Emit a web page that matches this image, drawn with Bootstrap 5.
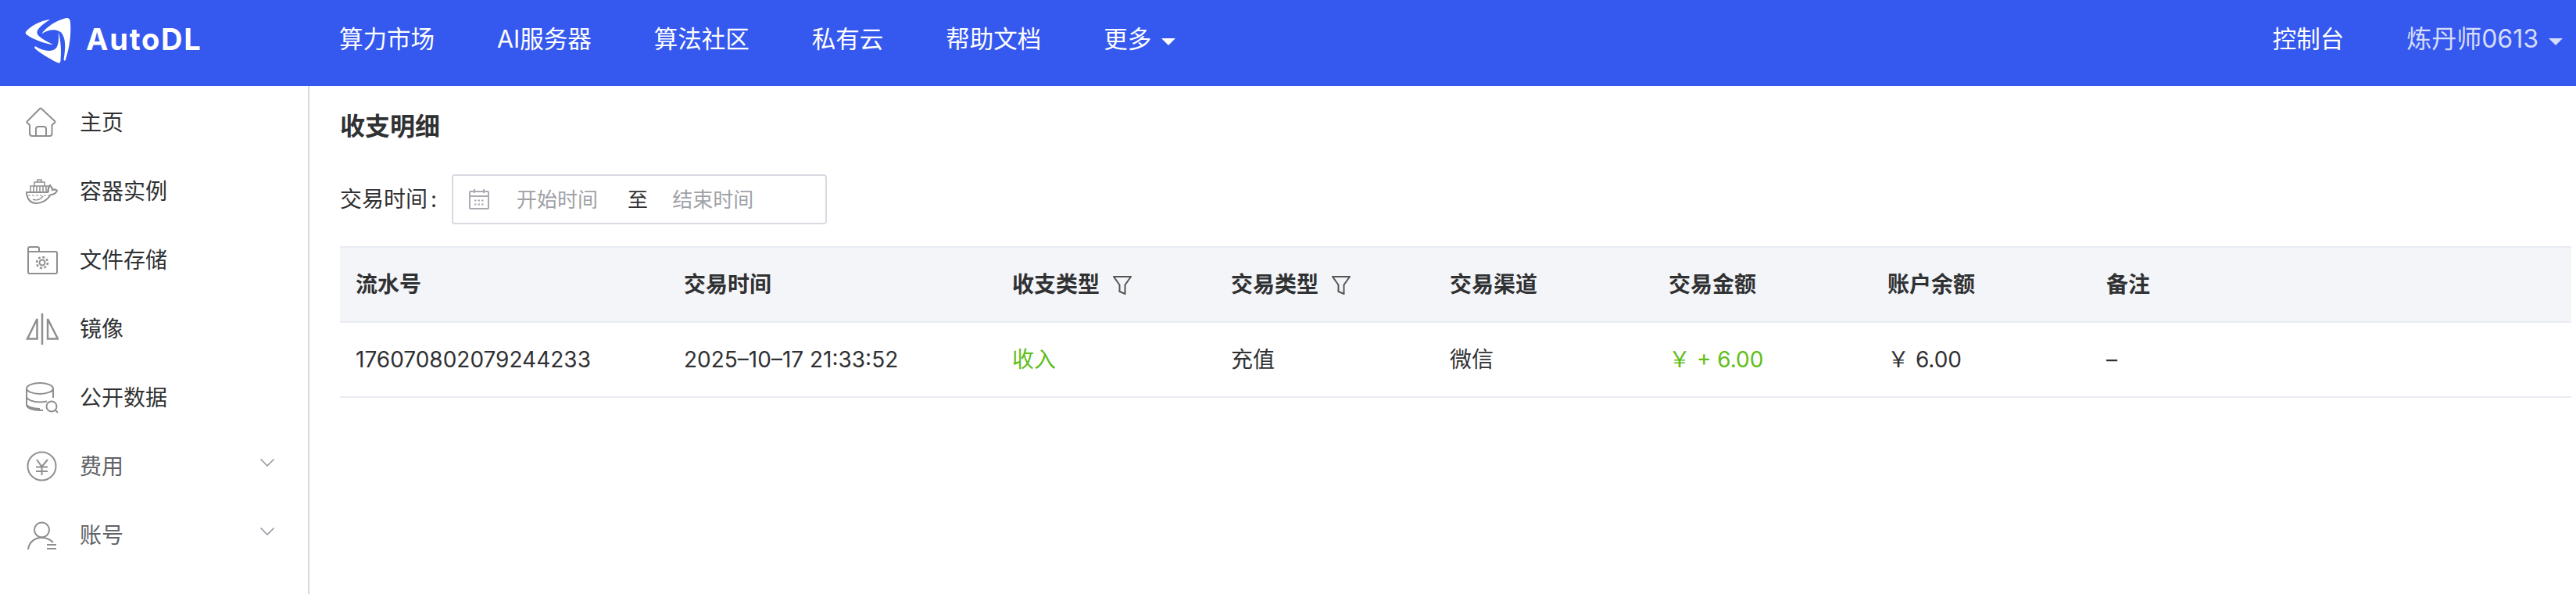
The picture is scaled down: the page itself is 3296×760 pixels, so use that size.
<!DOCTYPE html>
<html lang="zh-CN">

<head>
    <meta charset="utf-8">
    <meta name="viewport" content="width=device-width, initial-scale=1">
    <title>收支明细 - AutoDL</title>

    <link href="https://cdn.jsdelivr.net/npm/bootstrap@5.3.3/dist/css/bootstrap.min.css" rel="stylesheet">
    <style>
        html, body { height: 100%; }
        body { font-family: Inter, "Noto Sans CJK SC", sans-serif; color: #303133; overflow: hidden; background: #fff; }

        /* top bar */
        .top-bar { height: 110px; background: #3559ef; padding: 0; align-items: flex-start; flex-wrap: nowrap; }
        .brand-box { width: 434px; height: 110px; padding: 18px 0 0 28px; gap: 14px; flex: none; }
        .brand-name { font-size: 38px; font-weight: 700; color: #fff; line-height: 64px; letter-spacing: 1.800px; }
        .top-links { gap: 80px; padding-top: 27px; flex-direction: row; }
        .top-bar .navbar-nav .nav-link { font-size: 30.500px; line-height: 46px; color: #fff; padding: 0; white-space: nowrap; }
        .top-user { margin-left: auto; padding: 27px 17px 0 0; gap: 80px; align-items: flex-start; }
        .top-bar .navbar-nav .user-link { color: #d6dcfb; font-size: 32px; }
        .top-bar .dropdown-toggle::after { border-top-width: 9px; border-left-width: 9px; border-right-width: 9px; border-bottom: 0; margin-left: 13px; vertical-align: 3px; }

        /* side menu */
        .page-body { height: 650px; }
        .side-menu { width: 396px; flex: none; border-right: 2px solid #d8dae2; padding-top: 3px; }
        .side-item { height: 88px; padding: 0 43px 0 33px; font-size: 28px; color: #303133; text-decoration: none; }
        .side-item.soft { color: #606266; }
        .side-icon { width: 42px; height: 42px; flex: none; margin-right: 27px; fill: none; stroke: #8f8f8f; stroke-width: 2; }
        .side-arrow { width: 18px; height: 10px; fill: none; stroke: #909399; stroke-width: 1.500; margin-left: auto; margin-top: -10px; }

        /* bills */
        .bill-pane { padding: 0 6px 0 39px; }
        .bill-title { font-size: 32px; font-weight: 700; line-height: 48px; margin: 28px 0 37px; color: #303133; }
        .bill-label { font-size: 28px; margin-right: 19px; }
        .label-colon { margin-left: 4px; }
        .date-range { width: 480px; height: 64px; border: 2px solid #d8dae2; border-radius: 4px; padding: 0 20px; font-size: 26px; color: #a0a2a8; }
        .date-range svg { width: 26px; height: 26px; flex: none; fill: none; stroke: #a8abb2; stroke-width: 2; margin-right: 35px; }
        .date-sep { color: #303133; margin: 0 31px 0 38px; }
        .bill-table { margin: 28px 0 0; table-layout: fixed; font-size: 28px; --bs-table-color: #303133; width: 100%; }
        .bill-table th, .bill-table td { padding: 0 20px; vertical-align: middle; border-bottom: 2px solid #e9ebf3; white-space: nowrap; }
        .bill-table th { height: 96px; width: 280px; font-weight: 600; background: #f4f5f9; border-top: 2px solid #e9ebf3; }
        .bill-table th.wide-col { width: 420px; }
        .bill-table th.rest-col { width: auto; }
        .bill-table td { height: 96px; }
        .bill-table .money-in { color: #5fbe17; }
        .filter-mark { width: 24px; height: 24px; margin-left: 17px; fill: none; stroke: #555; stroke-width: 2; vertical-align: -3px; }
    </style>
</head>

<body>
    <!-- top bar -->
    <nav class="navbar navbar-expand top-bar">
        <a class="d-flex brand-box text-decoration-none" href="#">
            <svg width="68" height="64" viewBox="0 0 204 192">
                <path fill="#fff" d="M15 68C32 48 70 24 108 21C84 36 60 54 58 70C58 86 86 100 120 118C82 112 42 96 20 80C14 76 13 72 15 68Z"/>
                <path fill="#fff" d="M76 76C92 50 132 24 170 15C180 13 186 20 186 32C190 80 182 130 168 174C166 182 160 180 161 172C168 130 168 100 156 78C146 60 112 52 76 76Z"/>
                <path fill="#fff" d="M52 124C82 144 116 146 130 132C142 118 142 94 140 68C150 100 152 146 148 182C147 188 142 189 136 186C106 172 70 150 50 132C48 128 49 125 52 124Z"/>
            </svg>
            <span class="brand-name">AutoDL</span>
        </a>
        <ul class="navbar-nav top-links">
            <li class="nav-item"><a class="nav-link" href="#">算力市场</a></li>
            <li class="nav-item"><a class="nav-link" href="#">AI服务器</a></li>
            <li class="nav-item"><a class="nav-link" href="#">算法社区</a></li>
            <li class="nav-item"><a class="nav-link" href="#">私有云</a></li>
            <li class="nav-item"><a class="nav-link" href="#">帮助文档</a></li>
            <li class="nav-item"><a class="nav-link dropdown-toggle" href="#">更多</a></li>
        </ul>
        <ul class="navbar-nav top-user">
            <li class="nav-item"><a class="nav-link" href="#">控制台</a></li>
            <li class="nav-item"><a class="nav-link user-link dropdown-toggle" href="#">炼丹师0613</a></li>
        </ul>
    </nav>

    <div class="d-flex page-body">
        <!-- side menu -->
        <div class="side-menu">
            <a class="d-flex align-items-center side-item" href="#">
                <svg class="side-icon" viewBox="0 0 42 42"><path d="M5 24 1.700 21Q1 20 2 19L18 3Q19 2 20 3L37 19Q38 20 37 21L33.500 24V35a3 3 0 0 1-3 3H8a3 3 0 0 1-3-3Z"/><path d="M13 38V29a3 3 0 0 1 3-3h7a3 3 0 0 1 3 3v9"/></svg>
                主页
            </a>
            <a class="d-flex align-items-center side-item" href="#">
                <svg class="side-icon" viewBox="0 0 42 42"><path d="M1 22H28C28 18 30 15 31 13C33 15 34 17 34 19C36 18 38 18 40 20C38 24 35 25 32 25C28 31 22 36 13 36C6 36 1 30 1 22Z"/><path d="M6 22V14H29V22M11 14V9H24V14M15 9V6H20V9M10 14V22M14 14V22M18 14V22M22 14V22M26 14V22" stroke-width="1.500"/><path d="M3 26H30" stroke-width="1.200" stroke-dasharray="3 2"/><path d="M9 31C14 33 19 31 22 27" stroke-width="1.500"/></svg>
                容器实例
            </a>
            <a class="d-flex align-items-center side-item" href="#">
                <svg class="side-icon" viewBox="0 0 42 42"><path d="M3 10V6A2 2 0 0 1 5 4H15A2 2 0 0 1 17 6V10"/><path d="M3 10H38A2 2 0 0 1 40 12V36A2 2 0 0 1 38 38H5A2 2 0 0 1 3 36Z"/><circle cx="21" cy="24" r="3.500"/><circle cx="21" cy="24" r="7" stroke-width="2.500" stroke-dasharray="3 2.500"/></svg>
                文件存储
            </a>
            <a class="d-flex align-items-center side-item" href="#">
                <svg class="side-icon" viewBox="0 0 42 42"><path d="M14.500 8V33.500H2ZM28 8V33.500H41ZM21 1V41" stroke-width="2.500"/></svg>
                镜像
            </a>
            <a class="d-flex align-items-center side-item" href="#">
                <svg class="side-icon" viewBox="0 0 42 42"><ellipse cx="18" cy="9" rx="17" ry="7"/><path d="M1 9V30C1 34 9 37 18 37H22M35 9V21M1 19.500C1 23 9 26.500 18 26.500C21 26.500 24 26.200 27 25.500M1 29C1 32 9 35 18 35"/><circle cx="33" cy="32" r="6.500"/><path d="M37.500 36.500 41 40"/></svg>
                公开数据
            </a>
            <a class="d-flex align-items-center side-item soft" href="#">
                <svg class="side-icon" viewBox="0 0 42 42"><circle cx="20.500" cy="20.500" r="18"/><path d="M14 12 20.500 21 28 12M13 21.500H28M13 27H28M20.500 21V32"/></svg>
                费用
                <svg class="side-arrow" viewBox="0 0 18 10"><path d="M.5 .5 9 9 17.500 .5"/></svg>
            </a>
            <a class="d-flex align-items-center side-item soft" href="#">
                <svg class="side-icon" viewBox="0 0 42 42"><circle cx="20.500" cy="14" r="9.500"/><path d="M3 39C4 30 11 24 20 24C26 24 31 26 35 30M27 33H39M27 38H39"/></svg>
                账号
                <svg class="side-arrow" viewBox="0 0 18 10"><path d="M.5 .5 9 9 17.500 .5"/></svg>
            </a>
        </div>

        <!-- bills -->
        <div class="flex-grow-1 bill-pane">
            <h1 class="bill-title">收支明细</h1>
            <div class="d-flex align-items-center">
                <span class="bill-label">交易时间<span class="label-colon">:</span></span>
                <div class="d-flex align-items-center date-range">
                    <svg viewBox="0 0 26 26"><rect x="1" y="3" width="24" height="22" rx="1"/><path d="M1 9H25M7 0V5M19 0V5"/><path d="M7 14.500H19M7 19.500H19" stroke-dasharray="2.500 2"/></svg>
                    <span>开始时间</span>
                    <span class="date-sep">至</span>
                    <span>结束时间</span>
                </div>
            </div>
            <table class="table bill-table">
                <thead>
                    <tr>
                        <th class="wide-col">流水号</th>
                        <th class="wide-col">交易时间</th>
                        <th>收支类型<svg class="filter-mark" viewBox="0 0 24 24"><path d="M1 1H23L15.500 11.500V23L8.500 20V11.500Z"/></svg></th>
                        <th>交易类型<svg class="filter-mark" viewBox="0 0 24 24"><path d="M1 1H23L15.500 11.500V23L8.500 20V11.500Z"/></svg></th>
                        <th>交易渠道</th>
                        <th>交易金额</th>
                        <th>账户余额</th>
                        <th class="rest-col">备注</th>
                    </tr>
                </thead>
                <tbody>
                    <tr>
                        <td>176070802079244233</td>
                        <td>2025–10–17 21:33:52</td>
                        <td class="money-in">收入</td>
                        <td>充值</td>
                        <td>微信</td>
                        <td class="money-in">&#xFFE5; + 6.00</td>
                        <td>&#xFFE5; 6.00</td>
                        <td>–</td>
                    </tr>
                </tbody>
            </table>
        </div>
    </div>

    <script src="https://cdn.jsdelivr.net/npm/bootstrap@5.3.3/dist/js/bootstrap.bundle.min.js"></script>
</body>

</html>
